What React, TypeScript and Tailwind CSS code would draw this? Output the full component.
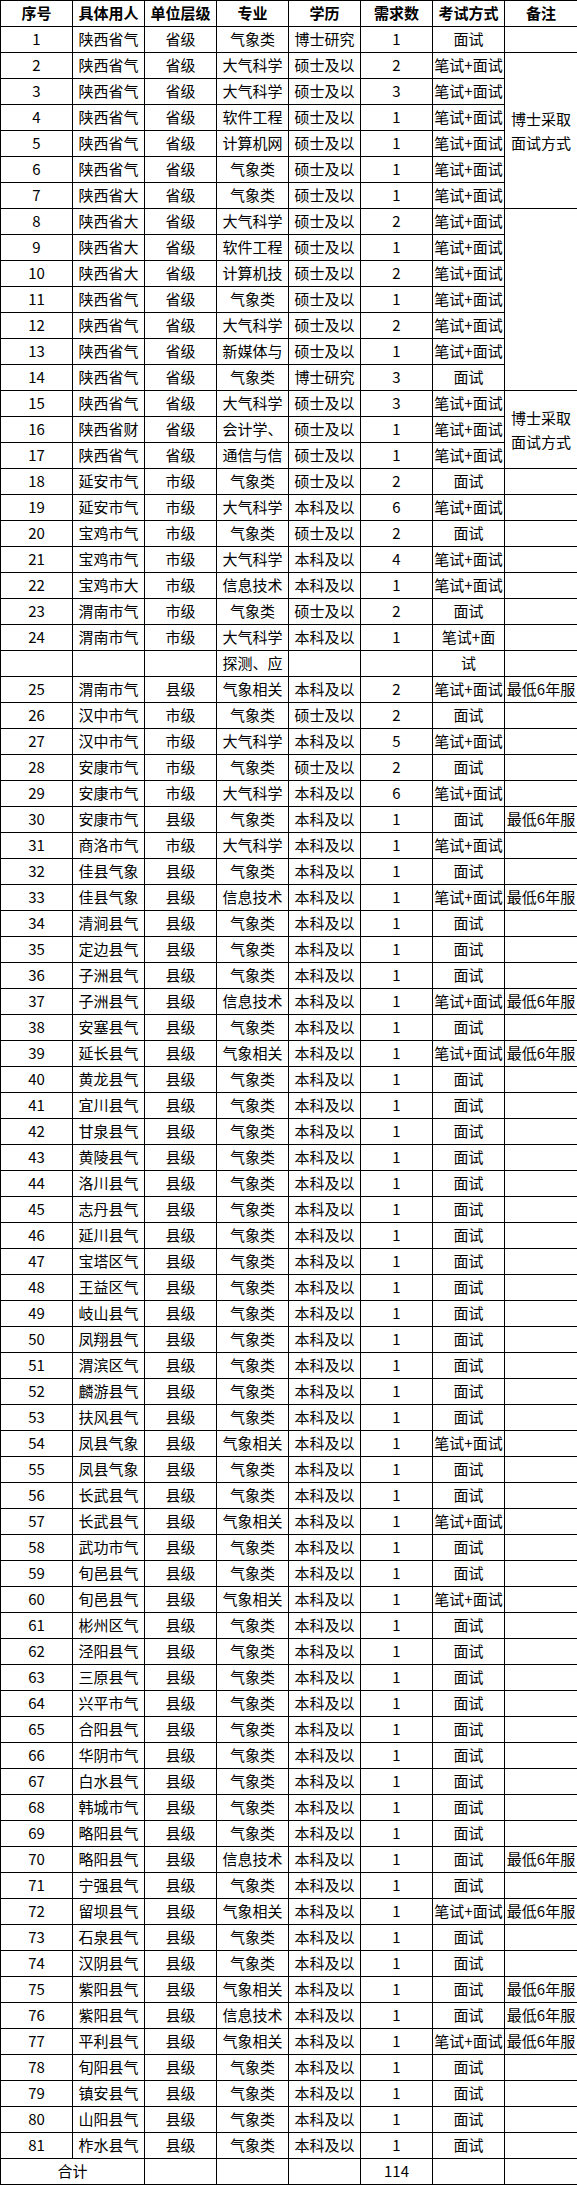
import React from 'react';

type Row = [string, string, string, string, string, string, string, string];

// 序号, 具体用人, 单位层级, 专业, 学历, 需求数, 考试方式, 备注
const top: Row[] = [
  ['1', '陕西省气', '省级', '气象类', '博士研究', '1', '面试', ''],
  ['2', '陕西省气', '省级', '大气科学', '硕士及以', '2', '笔试+面试', ''],
  ['3', '陕西省气', '省级', '大气科学', '硕士及以', '3', '笔试+面试', ''],
  ['4', '陕西省气', '省级', '软件工程', '硕士及以', '1', '笔试+面试', ''],
  ['5', '陕西省气', '省级', '计算机网', '硕士及以', '1', '笔试+面试', ''],
  ['6', '陕西省气', '省级', '气象类', '硕士及以', '1', '笔试+面试', ''],
  ['7', '陕西省大', '省级', '气象类', '硕士及以', '1', '笔试+面试', ''],
  ['8', '陕西省大', '省级', '大气科学', '硕士及以', '2', '笔试+面试', ''],
  ['9', '陕西省大', '省级', '软件工程', '硕士及以', '1', '笔试+面试', ''],
  ['10', '陕西省大', '省级', '计算机技', '硕士及以', '2', '笔试+面试', ''],
  ['11', '陕西省气', '省级', '气象类', '硕士及以', '1', '笔试+面试', ''],
  ['12', '陕西省气', '省级', '大气科学', '硕士及以', '2', '笔试+面试', ''],
  ['13', '陕西省气', '省级', '新媒体与', '硕士及以', '1', '笔试+面试', ''],
  ['14', '陕西省气', '省级', '气象类', '博士研究', '3', '面试', ''],
  ['15', '陕西省气', '省级', '大气科学', '硕士及以', '3', '笔试+面试', ''],
  ['16', '陕西省财', '省级', '会计学、', '硕士及以', '1', '笔试+面试', ''],
  ['17', '陕西省气', '省级', '通信与信', '硕士及以', '1', '笔试+面试', ''],
];

const mid: Row[] = [
  ['18', '延安市气', '市级', '气象类', '硕士及以', '2', '面试', ''],
  ['19', '延安市气', '市级', '大气科学', '本科及以', '6', '笔试+面试', ''],
  ['20', '宝鸡市气', '市级', '气象类', '硕士及以', '2', '面试', ''],
  ['21', '宝鸡市气', '市级', '大气科学', '本科及以', '4', '笔试+面试', ''],
  ['22', '宝鸡市大', '市级', '信息技术', '本科及以', '1', '笔试+面试', ''],
  ['23', '渭南市气', '市级', '气象类', '硕士及以', '2', '面试', ''],
  ['24', '渭南市气', '市级', '大气科学', '本科及以', '1', '笔试+面', ''],
  ['', '', '', '探测、应', '', '', '试', ''],
  ['25', '渭南市气', '县级', '气象相关', '本科及以', '2', '笔试+面试', '最低6年服'],
  ['26', '汉中市气', '市级', '气象类', '硕士及以', '2', '面试', ''],
  ['27', '汉中市气', '市级', '大气科学', '本科及以', '5', '笔试+面试', ''],
  ['28', '安康市气', '市级', '气象类', '硕士及以', '2', '面试', ''],
  ['29', '安康市气', '市级', '大气科学', '本科及以', '6', '笔试+面试', ''],
  ['30', '安康市气', '县级', '气象类', '本科及以', '1', '面试', '最低6年服'],
  ['31', '商洛市气', '市级', '大气科学', '本科及以', '1', '笔试+面试', ''],
];

// 县级, 本科及以, 1 for the rest
const county: [string, string, string, string, string][] = [
  ['32', '佳县气象', '气象类', '面试', ''],
  ['33', '佳县气象', '信息技术', '笔试+面试', '最低6年服'],
  ['34', '清涧县气', '气象类', '面试', ''],
  ['35', '定边县气', '气象类', '面试', ''],
  ['36', '子洲县气', '气象类', '面试', ''],
  ['37', '子洲县气', '信息技术', '笔试+面试', '最低6年服'],
  ['38', '安塞县气', '气象类', '面试', ''],
  ['39', '延长县气', '气象相关', '笔试+面试', '最低6年服'],
  ['40', '黄龙县气', '气象类', '面试', ''],
  ['41', '宜川县气', '气象类', '面试', ''],
  ['42', '甘泉县气', '气象类', '面试', ''],
  ['43', '黄陵县气', '气象类', '面试', ''],
  ['44', '洛川县气', '气象类', '面试', ''],
  ['45', '志丹县气', '气象类', '面试', ''],
  ['46', '延川县气', '气象类', '面试', ''],
  ['47', '宝塔区气', '气象类', '面试', ''],
  ['48', '王益区气', '气象类', '面试', ''],
  ['49', '岐山县气', '气象类', '面试', ''],
  ['50', '凤翔县气', '气象类', '面试', ''],
  ['51', '渭滨区气', '气象类', '面试', ''],
  ['52', '麟游县气', '气象类', '面试', ''],
  ['53', '扶风县气', '气象类', '面试', ''],
  ['54', '凤县气象', '气象相关', '笔试+面试', ''],
  ['55', '凤县气象', '气象类', '面试', ''],
  ['56', '长武县气', '气象类', '面试', ''],
  ['57', '长武县气', '气象相关', '笔试+面试', ''],
  ['58', '武功市气', '气象类', '面试', ''],
  ['59', '旬邑县气', '气象类', '面试', ''],
  ['60', '旬邑县气', '气象相关', '笔试+面试', ''],
  ['61', '彬州区气', '气象类', '面试', ''],
  ['62', '泾阳县气', '气象类', '面试', ''],
  ['63', '三原县气', '气象类', '面试', ''],
  ['64', '兴平市气', '气象类', '面试', ''],
  ['65', '合阳县气', '气象类', '面试', ''],
  ['66', '华阴市气', '气象类', '面试', ''],
  ['67', '白水县气', '气象类', '面试', ''],
  ['68', '韩城市气', '气象类', '面试', ''],
  ['69', '略阳县气', '气象类', '面试', ''],
  ['70', '略阳县气', '信息技术', '面试', '最低6年服'],
  ['71', '宁强县气', '气象类', '面试', ''],
  ['72', '留坝县气', '气象相关', '笔试+面试', '最低6年服'],
  ['73', '石泉县气', '气象类', '面试', ''],
  ['74', '汉阴县气', '气象类', '面试', ''],
  ['75', '紫阳县气', '气象相关', '面试', '最低6年服'],
  ['76', '紫阳县气', '信息技术', '面试', '最低6年服'],
  ['77', '平利县气', '气象相关', '笔试+面试', '最低6年服'],
  ['78', '旬阳县气', '气象类', '面试', ''],
  ['79', '镇安县气', '气象类', '面试', ''],
  ['80', '山阳县气', '气象类', '面试', ''],
  ['81', '柞水县气', '气象类', '面试', ''],
];

const rest: Row[] = [
  ...mid,
  ...county.map(([n, who, major, exam, note]): Row => [n, who, '县级', major, '本科及以', '1', exam, note]),
];

const headers = ['序号', '具体用人', '单位层级', '专业', '学历', '需求数', '考试方式', '备注'];

const cell = 'border border-black p-0 text-center align-middle whitespace-nowrap overflow-hidden';

function Note() {
  return (
    <span className="block leading-[24px]">
      博士采取
      <br />
      面试方式
    </span>
  );
}

export default function App() {
  return (
    <div
      className="bg-white text-black text-[15px]"
      style={{ fontFamily: '"Noto Sans CJK SC", "Noto Sans", sans-serif' }}
    >
      <table className="table-fixed border-collapse w-[577px]">
        <colgroup>
          {[72, 72, 72, 72, 72, 72, 72, 73].map((w, i) => (
            <col key={i} style={{ width: w }} />
          ))}
        </colgroup>
        <thead>
          <tr className="h-[26px]">
            {headers.map((h) => (
              <th key={h} className={`${cell} font-bold`}>
                {h}
              </th>
            ))}
          </tr>
        </thead>
        <tbody>
          {top.map((r, i) => (
            <tr key={r[0]} className="h-[26px]">
              {r.slice(0, 7).map((v, j) => (
                <td key={j} className={cell}>
                  {v}
                </td>
              ))}
              {i === 0 && <td className={cell}></td>}
              {i === 1 && (
                <td rowSpan={6} className={cell}>
                  <Note />
                </td>
              )}
              {i === 7 && <td rowSpan={7} className={cell}></td>}
              {i === 14 && (
                <td rowSpan={3} className={cell}>
                  <Note />
                </td>
              )}
            </tr>
          ))}
          {rest.map((r, i) => (
            <tr key={i} className="h-[26px]">
              {r.map((v, j) => (
                <td key={j} className={cell}>
                  {v}
                </td>
              ))}
            </tr>
          ))}
          <tr className="h-[26px]">
            <td colSpan={2} className={cell}>
              合计
            </td>
            <td className={cell}></td>
            <td className={cell}></td>
            <td className={cell}></td>
            <td className={cell}>114</td>
            <td className={cell}></td>
            <td className={cell}></td>
          </tr>
        </tbody>
      </table>
    </div>
  );
}
